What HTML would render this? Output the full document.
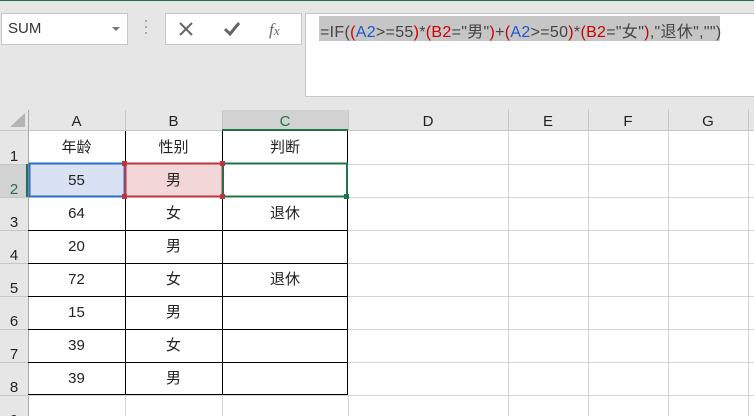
<!DOCTYPE html>
<html><head><meta charset="utf-8"><style>
html,body{margin:0;width:754px;height:416px;overflow:hidden}
body{background:#e6e6e6;font-family:"Liberation Sans","Noto Sans CJK SC",sans-serif;position:relative}
.a{position:absolute}
.c{position:absolute;text-align:center;font-size:15px;color:#222;line-height:33px}
.h{position:absolute;text-align:center;font-size:15px;color:#222;line-height:24px;top:110px}
.r{position:absolute;left:0;width:28px;text-align:center;font-size:15px;color:#222;line-height:20px}
</style></head><body>
<div class="a" style="left:0;top:0;width:754px;height:1px;background:#217346"></div>
<div class="a" style="left:1px;top:13px;width:125px;height:30px;background:#fff;border:1px solid #c6c6c6"></div>
<div class="a" style="left:8px;top:20px;font-size:15px;color:#333">SUM</div>
<div class="a" style="left:112px;top:27px;width:0;height:0;border-left:4px solid transparent;border-right:4px solid transparent;border-top:4px solid #777"></div>
<div class="a" style="left:145px;top:20px;width:2px;height:2px;background:#aaa;box-shadow:0 6px #aaa,0 12px #aaa"></div>
<div class="a" style="left:165px;top:13px;width:135px;height:30px;background:#fff;border:1px solid #c6c6c6"></div>
<svg class="a" style="left:165px;top:13px" width="136" height="32">
<path d="M15 10 L27 22 M27 10 L15 22" stroke="#666" stroke-width="2"/>
<path d="M60 16 L65 21 L74 10" stroke="#666" stroke-width="3" fill="none"/>
<text x="104" y="22" font-family="Liberation Serif,serif" font-style="italic" font-size="17" fill="#666">f<tspan font-size="13">x</tspan></text>
</svg>
<div class="a" style="left:305px;top:13px;width:449px;height:82px;background:#fff;border:1px solid #c6c6c6;border-right:none"></div>
<div class="a" style="left:319px;top:16px;width:401px;height:25px;background:#c6c6c6"></div>
<div class="a" style="left:320px;top:18px;font-size:16px;color:#444;white-space:nowrap;letter-spacing:0.3px">=IF(<span style="color:#c00">(</span><span style="color:#2255cc">A2</span>&gt;=55<span style="color:#c00">)</span>*<span style="color:#c00">(B2</span>="男"<span style="color:#c00">)</span>+<span style="color:#c00">(</span><span style="color:#2255cc">A2</span>&gt;=50<span style="color:#c00">)</span>*<span style="color:#c00">(B2</span>="女"<span style="color:#c00">)</span>,"退休","")</div>
<svg class="a" style="left:0;top:0" width="754" height="416">
<rect x="0" y="131" width="754" height="285" fill="#fff"/>
<rect x="0" y="131" width="28" height="285" fill="#e6e6e6"/>
<rect x="222" y="110" width="126" height="21" fill="#d2d2d2"/>
<rect x="0" y="164" width="28" height="33" fill="#d2d2d2"/>
<path d="M10 127 L25 127 L25 113 Z" fill="#b4b4b4"/>
<g stroke="#c6c6c6" stroke-width="1">
<line x1="125.5" y1="110" x2="125.5" y2="131"/><line x1="222.5" y1="110" x2="222.5" y2="131"/><line x1="348.5" y1="110" x2="348.5" y2="131"/><line x1="508.5" y1="110" x2="508.5" y2="131"/><line x1="588.5" y1="110" x2="588.5" y2="131"/><line x1="668.5" y1="110" x2="668.5" y2="131"/><line x1="748.5" y1="110" x2="748.5" y2="131"/>
<line x1="0" y1="130.5" x2="754" y2="130.5"/>
<line x1="0" y1="164.5" x2="28" y2="164.5"/><line x1="0" y1="197.5" x2="28" y2="197.5"/><line x1="0" y1="230.5" x2="28" y2="230.5"/><line x1="0" y1="263.5" x2="28" y2="263.5"/><line x1="0" y1="296.5" x2="28" y2="296.5"/><line x1="0" y1="329.5" x2="28" y2="329.5"/><line x1="0" y1="362.5" x2="28" y2="362.5"/><line x1="0" y1="395.5" x2="28" y2="395.5"/>
<line x1="28.5" y1="110" x2="28.5" y2="416" stroke="#aaa"/>
</g>
<g stroke="#d4d4d4">
<line x1="348" y1="164.5" x2="754" y2="164.5"/><line x1="348" y1="197.5" x2="754" y2="197.5"/><line x1="348" y1="230.5" x2="754" y2="230.5"/><line x1="348" y1="263.5" x2="754" y2="263.5"/><line x1="348" y1="296.5" x2="754" y2="296.5"/><line x1="348" y1="329.5" x2="754" y2="329.5"/><line x1="348" y1="362.5" x2="754" y2="362.5"/><line x1="28" y1="395.5" x2="754" y2="395.5"/>
<line x1="508.5" y1="131" x2="508.5" y2="416"/><line x1="588.5" y1="131" x2="588.5" y2="416"/><line x1="668.5" y1="131" x2="668.5" y2="416"/><line x1="748.5" y1="131" x2="748.5" y2="416"/>
<line x1="125.5" y1="395" x2="125.5" y2="416"/><line x1="222.5" y1="395" x2="222.5" y2="416"/><line x1="348.5" y1="395" x2="348.5" y2="416"/>
</g>
<rect x="29" y="164" width="96" height="33" fill="#d9e2f3"/>
<rect x="126" y="164" width="96" height="33" fill="#f3d7d8"/>
<g stroke="#000" stroke-width="1">
<line x1="125.5" y1="131" x2="125.5" y2="395"/><line x1="222.5" y1="131" x2="222.5" y2="395"/><line x1="347.5" y1="131" x2="347.5" y2="395"/>
<line x1="28" y1="230.5" x2="348" y2="230.5"/><line x1="28" y1="263.5" x2="348" y2="263.5"/><line x1="28" y1="296.5" x2="348" y2="296.5"/><line x1="28" y1="329.5" x2="348" y2="329.5"/><line x1="28" y1="362.5" x2="348" y2="362.5"/><line x1="28" y1="394.5" x2="348" y2="394.5"/>
</g>
<rect x="29.5" y="163.5" width="95" height="33" fill="none" stroke="#2f6bc8" stroke-width="2"/>
<rect x="125.5" y="163.5" width="97" height="33" fill="none" stroke="#c0343c" stroke-width="2"/>
<rect x="223" y="163.5" width="124" height="33" fill="none" stroke="#217346" stroke-width="2"/>
<rect x="344" y="194" width="5" height="5" fill="#217346"/>
<rect x="122" y="161" width="5" height="5" fill="#c0343c"/><rect x="122" y="194" width="5" height="5" fill="#c0343c"/><rect x="220" y="161" width="5" height="5" fill="#c0343c"/><rect x="220" y="194" width="5" height="5" fill="#c0343c"/>
<line x1="222" y1="130" x2="348" y2="130" stroke="#217346" stroke-width="2"/>
<line x1="27" y1="164" x2="27" y2="197" stroke="#217346" stroke-width="2"/>
</svg>
<div class="h" style="left:28px;width:97px">A</div><div class="h" style="left:125px;width:97px">B</div><div class="h" style="left:222px;width:126px;color:#217346">C</div><div class="h" style="left:348px;width:160px">D</div><div class="h" style="left:508px;width:80px">E</div><div class="h" style="left:588px;width:80px">F</div><div class="h" style="left:668px;width:80px">G</div>
<div class="r" style="top:147px">1</div><div class="r" style="top:180px;color:#217346">2</div><div class="r" style="top:213px">3</div><div class="r" style="top:246px">4</div><div class="r" style="top:279px">5</div><div class="r" style="top:312px">6</div><div class="r" style="top:345px">7</div><div class="r" style="top:378px">8</div><div class="r" style="top:411px">9</div>
<div class="c" style="left:28px;top:131px;width:97px">年龄</div><div class="c" style="left:125px;top:131px;width:97px">性别</div><div class="c" style="left:222px;top:131px;width:126px">判断</div>
<div class="c" style="left:28px;top:164px;width:97px">55</div><div class="c" style="left:125px;top:164px;width:97px">男</div>
<div class="c" style="left:28px;top:197px;width:97px">64</div><div class="c" style="left:125px;top:197px;width:97px">女</div><div class="c" style="left:222px;top:197px;width:126px">退休</div>
<div class="c" style="left:28px;top:230px;width:97px">20</div><div class="c" style="left:125px;top:230px;width:97px">男</div>
<div class="c" style="left:28px;top:263px;width:97px">72</div><div class="c" style="left:125px;top:263px;width:97px">女</div><div class="c" style="left:222px;top:263px;width:126px">退休</div>
<div class="c" style="left:28px;top:296px;width:97px">15</div><div class="c" style="left:125px;top:296px;width:97px">男</div>
<div class="c" style="left:28px;top:329px;width:97px">39</div><div class="c" style="left:125px;top:329px;width:97px">女</div>
<div class="c" style="left:28px;top:362px;width:97px">39</div><div class="c" style="left:125px;top:362px;width:97px">男</div>
</body></html>
